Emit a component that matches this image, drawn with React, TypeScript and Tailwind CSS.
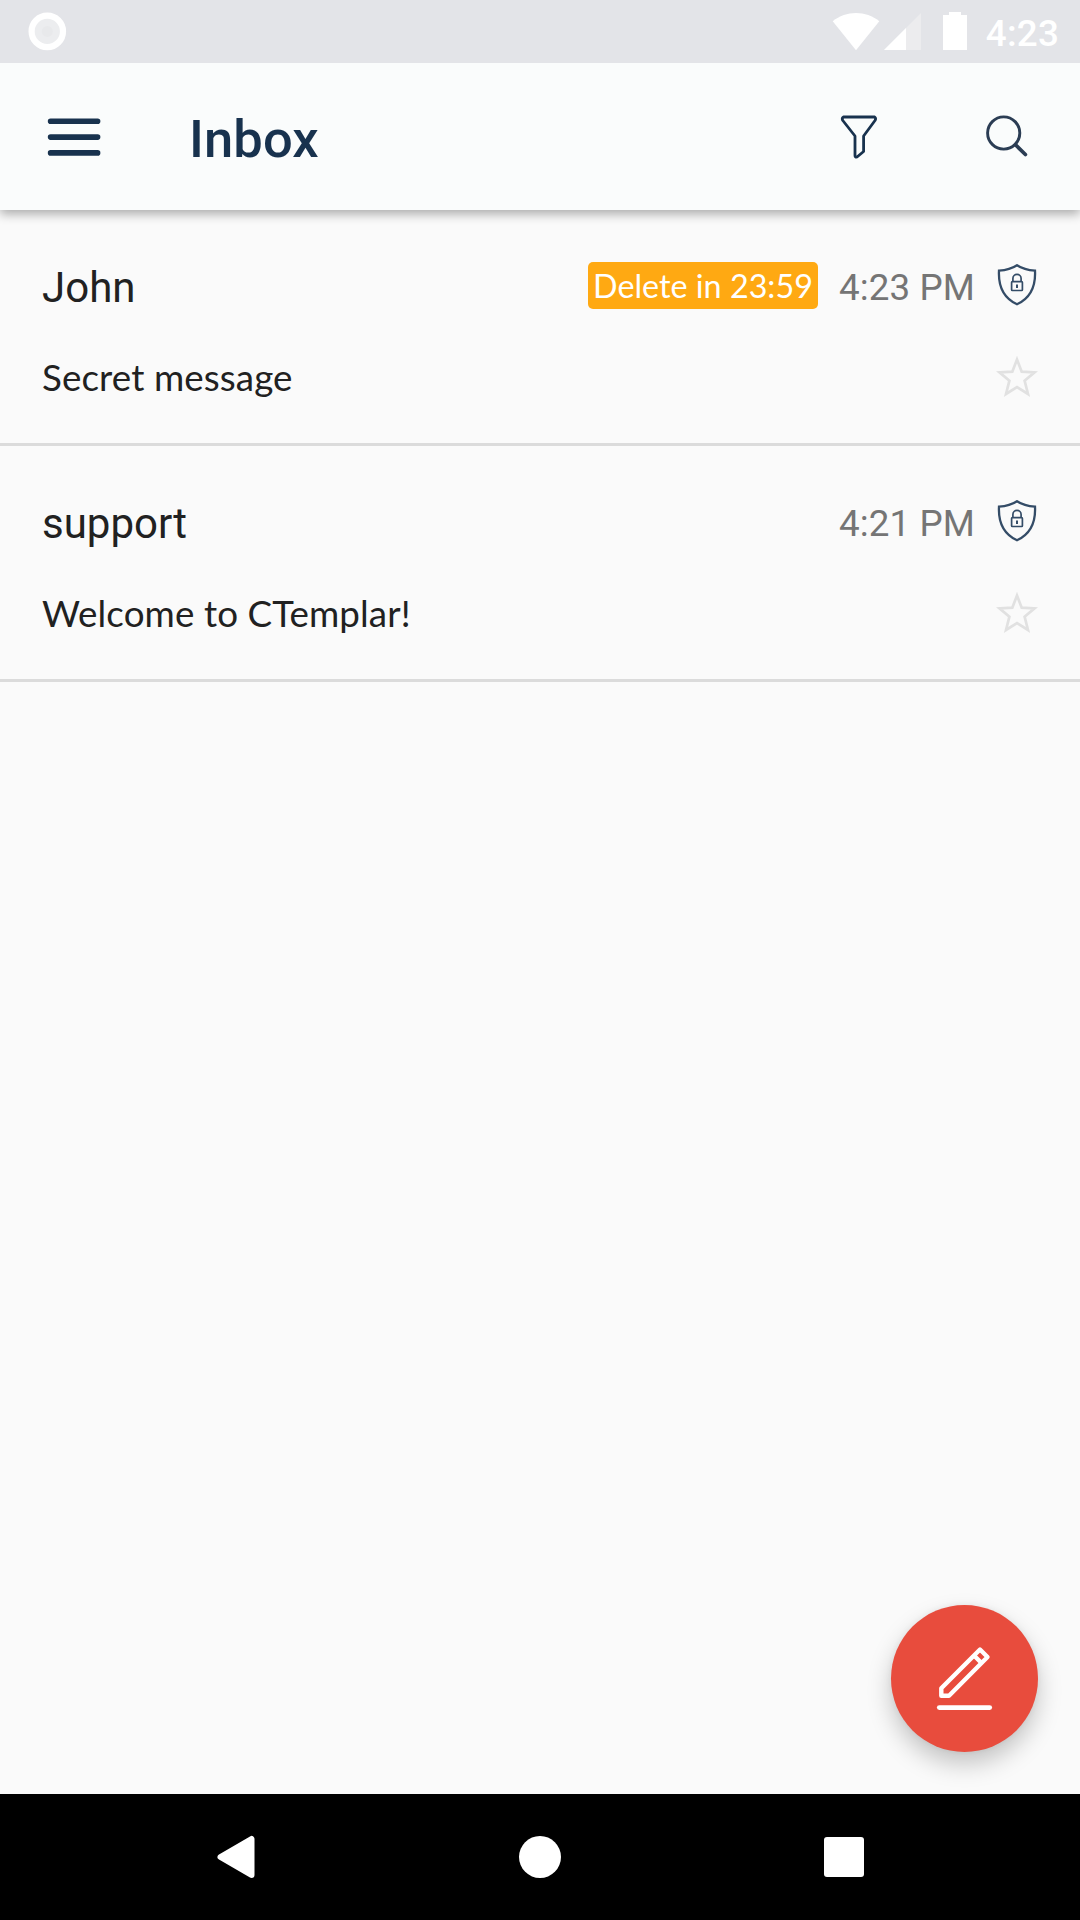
type Mail = { sender: string; subject: string; time: string; badge?: string };

const mails: Mail[] = [
  { sender: "John", subject: "Secret message", time: "4:23 PM", badge: "Delete in 23:59" },
  { sender: "support", subject: "Welcome to CTemplar!", time: "4:21 PM" },
];

function StatusBar() {
  return (
    <div className="relative z-20 flex h-[63px] shrink-0 items-start bg-[#e3e4e8] pr-[21px] pl-7 text-white">
      <svg className="mt-3 h-[39px] w-[39px]" viewBox="0 0 39 39">
        <circle cx="19.3" cy="19.4" r="15.7" fill="#ecedef" stroke="#fff" strokeWidth="6.2" />
        <circle cx="19.3" cy="19.4" r="5.5" fill="#e8e9eb" />
      </svg>
      <svg className="mt-3 ml-auto h-[39px] w-[136px]" viewBox="832 12 136 39" fill="#fff">
        <path d="M832.7 21.3C846 10.3 866 10.3 879.3 21.3L856 50.2Z" />
        <path d="M921 13V50H884Z" fill="#ececee" />
        <path d="M906 28V50H884Z" />
        <path d="M949 12h12v3h6v35h-24V15h6Z" />
      </svg>
      <span className="mt-3 ml-[18px] text-[36.75px] leading-[43px] font-medium tracking-[0.2px]">4:23</span>
    </div>
  );
}

function Header() {
  return (
    <header className="relative z-10 flex h-[147px] shrink-0 items-center bg-[#fafcfc] pr-[51px] pl-[47px] text-[#18324e] shadow-[0_4px_10px_rgba(0,0,0,0.32)]">
      <svg className="h-10 w-[54px]" viewBox="0 0 54 40" stroke="currentColor" strokeWidth="5.6" strokeLinecap="round">
        <path d="M3.6 4.2H50.6M3.6 20.1H50.6M3.6 35.9H50.6" />
      </svg>
      <h1 className="mt-[4px] ml-[88px] text-[52.5px] leading-[62px] font-medium tracking-[0.1px]">Inbox</h1>
      <svg className="ml-auto h-[46px] w-[38px]" viewBox="840 114 38 46" fill="none" stroke="currentColor" strokeWidth="2.8" strokeLinejoin="round">
        <path d="M843.5 117H874.7Q876.3 118.3 875 120.5L863.6 136V151.5L857 157Q855 157.5 855 155.5V136L842.8 120.5Q841.5 118.2 843.5 117Z" />
      </svg>
      <svg className="ml-[107px] h-[44px] w-[44px]" viewBox="985 114 44 44" fill="none" stroke="#2b3d54" strokeLinecap="round">
        <circle cx="1003.7" cy="132" r="16.1" strokeWidth="2.9" />
        <path d="M1015.6 143.9L1025.4 153.5" strokeWidth="3.7" />
      </svg>
    </header>
  );
}

function ShieldIcon() {
  return (
    <svg className="mt-[2px] h-[42px] w-[42px] self-start" viewBox="-1 0 42 42" fill="none" stroke="#344c67">
      <path d="M20 1.3C14.5 5 8.5 6.3 2 6.7C1.2 22 5.5 33.5 20 40.3C34.5 33.5 38.8 22 38 6.7C31.5 6.3 25.5 5 20 1.3Z" strokeWidth="2.3" />
      <rect x="14.6" y="17.6" width="10.8" height="8.9" rx="0.8" strokeWidth="1.7" />
      <path d="M15.9 17.4V14.5A4.1 4.1 0 0 1 24.1 14.5V17.4" strokeWidth="1.7" />
      <path d="M20 20.5V24" strokeWidth="2" />
    </svg>
  );
}

function StarIcon() {
  return (
    <svg className="h-[42px] w-[42px]" viewBox="0 0 42 42" fill="none" stroke="#e1e1e1" strokeWidth="2.7">
      <path d="M21 3.5L25.7 15.7L38.6 16.4L28.6 24.7L32 38L21 31.2L10 38L13.4 24.7L3.4 16.4L16.3 15.7Z" />
    </svg>
  );
}

function MailRow({ mail }: { mail: Mail }) {
  return (
    <li className="h-[236px] border-b-[3px] border-[#dbdbdb] px-[42px] pt-[52px] text-[#212121]">
      <div className="flex h-[51px] items-center">
        <span className="flex-1 text-[42px] leading-[50px]">{mail.sender}</span>
        {mail.badge && (
          <span className="mr-[20px] flex h-[47px] w-[230px] items-center justify-center self-start rounded-[5px] bg-[#ffa912] font-['Lato',sans-serif] text-[32.3px] leading-[41px] whitespace-nowrap text-white">
            {mail.badge}
          </span>
        )}
        <span className="mr-[21px] w-[137px] text-right text-[36.75px] leading-[43px] tracking-[0.1px] whitespace-nowrap text-[#757575]">
          {mail.time}
        </span>
        <ShieldIcon />
      </div>
      <div className="mt-[42px] flex h-[44px] items-center justify-between">
        <span className="font-['Lato',sans-serif] text-[36.75px] leading-[44px] tracking-[0.1px]">{mail.subject}</span>
        <StarIcon />
      </div>
    </li>
  );
}

function ComposeButton() {
  return (
    <button
      aria-label="Compose"
      className="absolute right-[42px] bottom-[42px] h-[147px] w-[147px] rounded-full bg-[#e84c3d] shadow-[0_12px_24px_rgba(0,0,0,0.22),0_0_6px_rgba(0,0,0,0.06)]"
    >
      <svg className="h-full w-full" viewBox="0 0 147 147" fill="none" stroke="#fff" strokeWidth="4.4" strokeLinejoin="round">
        <path d="M50.3 90.7V83.3L89 44.5L96.5 52L58 90.7Z" />
        <path d="M82.5 50L91 58.5" />
        <path d="M48.3 102.6H98.7" strokeWidth="4.8" strokeLinecap="round" />
      </svg>
    </button>
  );
}

function NavigationBar() {
  return (
    <nav className="grid h-[126px] shrink-0 grid-cols-3 place-items-center bg-black px-[84px]">
      <svg className="h-11 w-11" viewBox="214 1835 44 44" fill="#fff" stroke="#fff" strokeWidth="6" strokeLinejoin="round">
        <path d="M220.5 1857L251.5 1839V1875Z" />
      </svg>
      <span className="h-[42px] w-[42px] rounded-full bg-white" />
      <span className="h-10 w-10 rounded-[3px] bg-white" />
    </nav>
  );
}

export default function App() {
  return (
    <div className="flex h-[1920px] w-[1080px] flex-col overflow-hidden bg-[#fafafa] font-['Roboto',sans-serif]">
      <StatusBar />
      <Header />
      <main className="relative flex-1">
        <ul>
          {mails.map((mail) => (
            <MailRow key={mail.sender} mail={mail} />
          ))}
        </ul>
        <ComposeButton />
      </main>
      <NavigationBar />
    </div>
  );
}
